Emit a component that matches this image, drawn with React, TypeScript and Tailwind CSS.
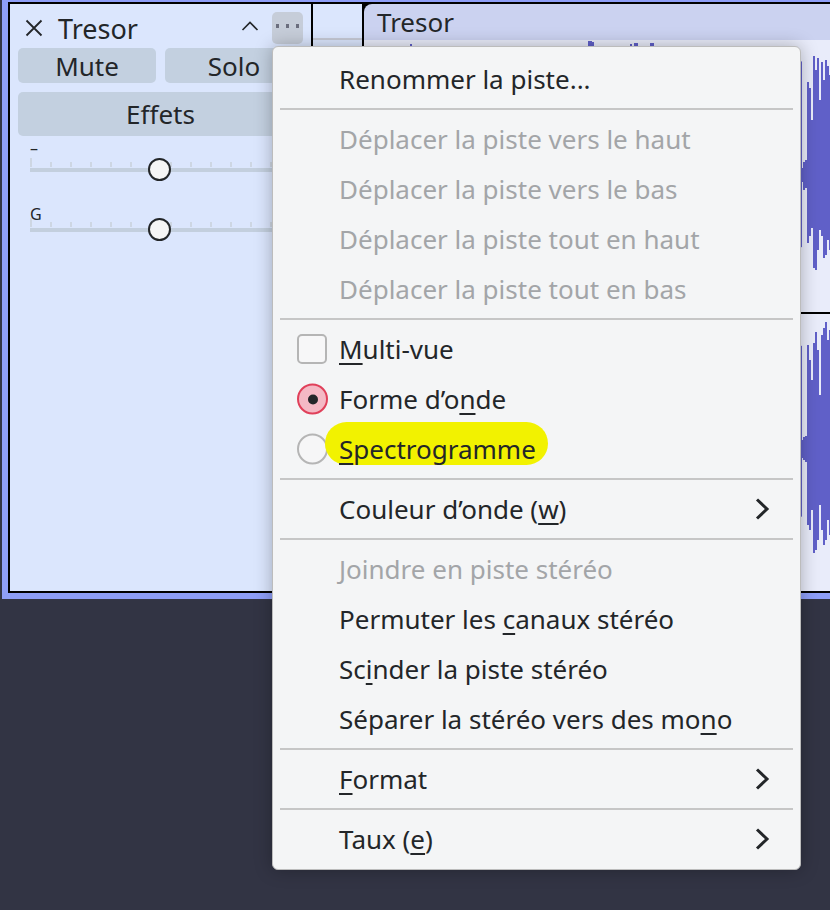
import React from "react";

type ItemProps = {
  children: React.ReactNode;
  disabled?: boolean;
  sub?: boolean;
  left?: React.ReactNode;
  highlight?: boolean;
};

function Chevron() {
  return (
    <svg width="16" height="24" viewBox="0 0 16 24" className="ml-auto shrink-0">
      <path d="M3 2.5 L13 12 L3 21.5" fill="none" stroke="#232629" strokeWidth="3" strokeLinejoin="miter" />
    </svg>
  );
}

function Item({ children, disabled, sub, left, highlight }: ItemProps) {
  return (
    <div
      className={
        disabled
          ? "relative flex h-[50px] items-center pl-[66px] pr-[30px] text-[26px] text-[#a3a5a8]"
          : "relative flex h-[50px] items-center pl-[66px] pr-[30px] text-[26px] text-[#232629]"
      }
    >
      {left && <div className="absolute left-[24px] top-1/2 -translate-y-1/2">{left}</div>}
      {highlight && (
        <span className="absolute left-[52px] top-[-2px] h-[43px] w-[223px] rounded-[22px] bg-[#f2f200]" />
      )}
      <span className="relative whitespace-nowrap">{children}</span>
      {sub && <Chevron />}
    </div>
  );
}

function U({ children }: { children: React.ReactNode }) {
  return <span className="underline decoration-[1.5px] underline-offset-[4px]">{children}</span>;
}

function Sep() {
  return <div className="mx-[7px] my-[4px] h-[2px] bg-[#c6c6c6]" />;
}

function Menu() {
  return (
    <div className="absolute left-[272px] top-[46px] w-[529px] rounded-[6px] border border-[#bcbcbc] bg-[#f4f5f6] pt-[7px] pb-[5px] shadow-[0_0_18px_rgba(0,0,0,0.28)]">
      <Item>Renommer la piste...</Item>
      <Sep />
      <Item disabled>Déplacer la piste vers le haut</Item>
      <Item disabled>Déplacer la piste vers le bas</Item>
      <Item disabled>Déplacer la piste tout en haut</Item>
      <Item disabled>Déplacer la piste tout en bas</Item>
      <Sep />
      <Item left={<div className="h-[30px] w-[30px] rounded-[5px] border-2 border-[#b5b5b5] bg-[#f7f7f8]" />}>
        <U>M</U>ulti-vue
      </Item>
      <Item
        left={
          <div className="flex h-[31px] w-[31px] items-center justify-center rounded-full border-2 border-[#e0405a] bg-[#f4b9c5]">
            <div className="h-[10px] w-[10px] rounded-full bg-[#232629]" />
          </div>
        }
      >
        Forme d’o<U>n</U>de
      </Item>
      <Item
        highlight
        left={<div className="h-[31px] w-[31px] rounded-full border-2 border-[#b5b5b5] bg-[#f6f6f7]" />}
      >
        <U>S</U>pectrogramme
      </Item>
      <Sep />
      <Item sub>
        Couleur d’onde (<U>w</U>)
      </Item>
      <Sep />
      <Item disabled>Joindre en piste stéréo</Item>
      <Item>
        Permuter les <U>c</U>anaux stéréo
      </Item>
      <Item>
        Sc<U>i</U>nder la piste stéréo
      </Item>
      <Item>
        Séparer la stéréo vers des mo<U>n</U>o
      </Item>
      <Sep />
      <Item sub>
        <U>F</U>ormat
      </Item>
      <Sep />
      <Item sub>
        Taux (<U>e</U>)
      </Item>
    </div>
  );
}

function Slider({ label, labelTop }: { label: string; labelTop: string }) {
  const ticks = Array.from({ length: 14 }, (_, i) => i);
  return (
    <div className="relative ml-[12px] h-[40px] w-[262px]">
      <span className={labelTop + " absolute left-[0px] text-[16px] leading-none text-[#232629]"}>{label}</span>
      <div className="absolute left-0 top-[20px] flex w-[262px] justify-between">
        {ticks.map((i) => (
          <div key={i} className={i === 0 ? "mt-[-4px] h-[9px] w-[2px] bg-[#cdd6e3]" : "h-[5px] w-[2px] bg-[#cdd6e3]"} />
        ))}
      </div>
      <div className="absolute left-0 top-[26px] h-[4px] w-[262px] bg-[#c3cfde]" />
      <div className="absolute left-[118px] top-[16px] h-[23px] w-[23px] rounded-full border-2 border-[#232629] bg-[#f5f5f5]" />
    </div>
  );
}

function LeftPanel() {
  return (
    <div className="flex w-[301px] flex-col bg-[#dbe6fd] px-[8px]">
      <div className="mt-[8px] flex h-[32px] items-center">
        <svg width="18" height="18" viewBox="0 0 18 18" className="ml-[7px]">
          <path d="M1.5 1.5 L16.5 16.5 M16.5 1.5 L1.5 16.5" stroke="#232629" strokeWidth="1.8" />
        </svg>
        <span className="ml-[15px] text-[27px] leading-none text-[#232629]">Tresor</span>
        <svg width="18" height="12" viewBox="0 0 18 12" className="ml-auto mr-[13px] mt-[-4px]">
          <path d="M1.5 10 L9 2.5 L16.5 10" fill="none" stroke="#232629" strokeWidth="1.6" />
        </svg>
        <div className="flex h-[32px] w-[31px] items-start justify-center gap-[7px] rounded-[5px] bg-[#c6cdd9] pt-[12px]">
          <div className="h-[4px] w-[3px] bg-[#6b6e7e]" />
          <div className="h-[4px] w-[3px] bg-[#6b6e7e]" />
          <div className="h-[4px] w-[3px] bg-[#6b6e7e]" />
        </div>
      </div>
      <div className="mt-[4px] flex h-[35px] gap-[9px]">
        <div className="flex flex-1 items-center justify-center rounded-[5px] bg-[#c3d0e0] text-[26px] leading-none text-[#232629]">Mute</div>
        <div className="flex flex-1 items-center justify-center rounded-[5px] bg-[#c3d0e0] text-[26px] leading-none text-[#232629]">Solo</div>
      </div>
      <div className="mt-[9px] flex h-[44px] items-center justify-center rounded-[5px] bg-[#c3d0e0] text-[26px] leading-none text-[#232629]">
        Effets
      </div>
      <div className="mt-[6px]">
        <Slider label="–" labelTop="top-[-2px]" />
      </div>
      <div className="mt-[20px]">
        <Slider label="G" labelTop="top-[4px]" />
      </div>
    </div>
  );
}

function rnd(i: number) {
  const v = Math.sin(i * 12.9898 + 78.233) * 43758.5453;
  return v - Math.floor(v);
}

type Col = [number, number, number]; // x, top, bottom

function channelCols(center: number, visible: Col[], peaks: Record<number, number>): Col[] {
  const cols: Col[] = [];
  for (let x = 364; x < 801; x += 2) {
    let a = 25 + rnd(x + center) * 95;
    if (a > 126) a = 126;
    const top = peaks[x] !== undefined ? peaks[x] : center - a;
    const bot = center + 25 + rnd(x * 3 + center) * 95;
    cols.push([x, top, Math.min(bot, center + 126)]);
  }
  return cols.concat(visible);
}

const ch1Visible: Col[] = [
  [801, 168, 182],
  [803, 162, 190],
  [805, 160, 188],
  [807, 82, 243],
  [809, 88, 236],
  [811, 120, 228],
  [813, 56, 268],
  [815, 70, 270],
  [817, 58, 250],
  [819, 100, 230],
  [821, 62, 236],
  [823, 80, 258],
  [825, 60, 255],
  [827, 66, 240],
  [829, 75, 250],
];

const ch2Visible: Col[] = [
  [801, 440, 458],
  [803, 437, 460],
  [805, 436, 462],
  [807, 345, 525],
  [809, 360, 530],
  [811, 380, 510],
  [813, 343, 553],
  [815, 332, 550],
  [817, 350, 540],
  [819, 395, 505],
  [821, 335, 530],
  [823, 328, 545],
  [825, 322, 540],
  [827, 340, 520],
  [829, 330, 535],
];

function Wave({ cols, vb, h }: { cols: Col[]; vb: string; h: number }) {
  return (
    <svg width="466" height={h} viewBox={vb} className="block">
      {cols.map(([x, t, b]) => (
        <rect key={x} x={x} y={t} width={2} height={b - t} fill="#6060c8" />
      ))}
    </svg>
  );
}

function Waveform() {
  const c1 = channelCols(175, ch1Visible, { 410: 44, 588: 41, 590: 41, 592: 42, 630: 44, 634: 43, 636: 43, 650: 43, 652: 43 });
  const c2 = channelCols(452, ch2Visible, {});
  return (
    <div className="flex flex-1 flex-col bg-black">
      <div className="flex h-[36px] items-center rounded-tl-[8px] bg-[#cbd2f0] pl-[13px]">
        <span className="text-[26px] leading-none text-[#232629]">Tresor</span>
      </div>
      <div className="h-[272px] overflow-hidden bg-[#e9ecfa]">
        <Wave cols={c1} vb="364 40 466 272" h={272} />
      </div>
      <div className="mt-[2px] flex-1 overflow-hidden bg-[#e9ecfa]">
        <Wave cols={c2} vb="364 314 466 277" h={277} />
      </div>
    </div>
  );
}

export default function App() {
  return (
    <div className="relative h-[910px] w-[830px] overflow-hidden bg-[#323444] font-['Noto_Sans','Open_Sans',sans-serif]">
      <div className="ml-[2px] w-[880px] bg-[#8e9ef7] pb-[6px] pl-[6px] pt-[2px]">
        <div className="flex h-[591px] gap-[2px] border-2 border-black bg-black">
          <LeftPanel />
          <div className="w-[49px] bg-[#dbe6fd] pt-[34px]">
            <div className="h-[2px] bg-[#c6cad6]" />
          </div>
          <Waveform />
        </div>
      </div>
      <Menu />
    </div>
  );
}
